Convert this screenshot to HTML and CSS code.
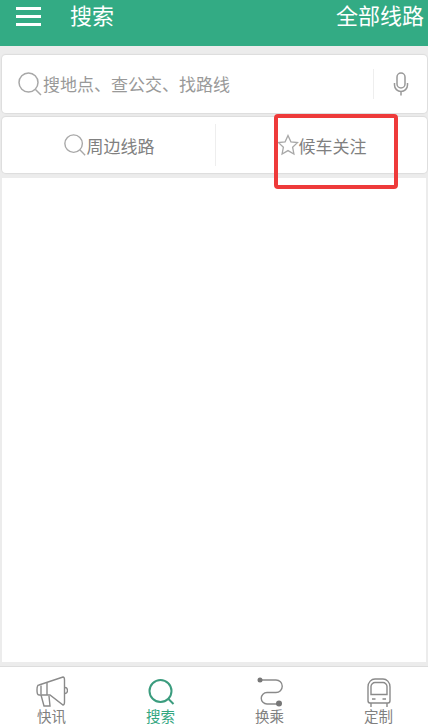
FILE: index.html
```html
<!DOCTYPE html>
<html>
	<head>
		<meta charset="utf-8">
		<title>搜索</title>
		<link rel="stylesheet" href="styles.css">
	</head>
	<body>
		<div id="wrapper">
			<div class="header">
				<div class="menu"><span></span><span></span><span></span></div>
				<div class="title">搜索</div>
				<div class="all">全部线路</div>
			</div>
			<div class="search">
				<svg class="icon-search" width="26" height="26" viewBox="0 0 26 26"><circle cx="11.500" cy="11.500" r="9.500"/><path d="M18.500 18.500L24 24"/></svg>
				<div class="placeholder">搜地点、查公交、找路线</div>
				<div class="mic">
					<svg width="18" height="24" viewBox="0 0 18 24"><rect x="5" y="1" width="8" height="15" rx="4"/><path d="M2.500 11v2a6.500 6.500 0 0 0 13 0v-2M9 19.500v4"/></svg>
				</div>
			</div>
			<div class="filters">
				<div class="filter">
					<svg class="icon-search" width="24" height="24" viewBox="0 0 26 26"><circle cx="11.500" cy="11.500" r="9.500"/><path d="M18.500 18.500L24 24"/></svg>
					<span>周边线路</span>
				</div>
				<div class="filter">
					<svg class="icon-star" width="22" height="22" viewBox="0 0 22 22"><path d="M11 1.500l2.900 6.300 6.600.8-4.900 4.600 1.300 6.800L11 16.600l-5.900 3.400 1.300-6.800-4.900-4.600 6.600-.8z"/></svg>
					<span>候车关注</span>
				</div>
			</div>
			<div class="content"></div>
			<div class="tabs">
				<div class="tab">
					<svg width="32" height="32" viewBox="0 0 32 32"><path d="M3 9L27 1c1 0 1.500 1 1.500 3v22c0 2-.5 3-1.500 3L14 19H3c-1.500 0-2-1.500-2-5s.5-5 2-5z"/><path d="M11 7v12M5 9.500v9M5 19l3 11h6l-1-10M29 11.500c2 0 2.500 1.500 2.500 3s-.5 3-2.500 3"/></svg>
					<span>快讯</span>
				</div>
				<div class="tab active">
					<svg width="32" height="32" viewBox="0 0 32 32"><circle cx="15.500" cy="15" r="11"/><path d="M23.500 23l5 5"/></svg>
					<span>搜索</span>
				</div>
				<div class="tab">
					<svg width="32" height="32" viewBox="0 0 32 32"><path d="M6 4h16a6 6 0 0 1 0 12.500h-9a5.500 5.500 0 0 0 0 11.500h11"/><circle class="dot" cx="6" cy="4" r="2.500"/><circle class="dot" cx="25" cy="27.500" r="3"/></svg>
					<span>换乘</span>
				</div>
				<div class="tab">
					<svg width="32" height="32" viewBox="0 0 32 32"><path d="M7 27c-1.500 0-2-1-2-2.500V11c0-5 3.500-8 7-8h8c3.500 0 7 3 7 8v13.500c0 1.500-.5 2.500-2 2.500z"/><path d="M8 18.500v-8c0-2 2-4 4-4h8c2 0 4 2 4 4v8zM9 23h3.500M19.500 23H23M8 27v4M24 27v4"/></svg>
					<span>定制</span>
				</div>
			</div>
			<div class="mark"></div>
		</div>
	</body>
</html>
```

FILE: styles.css
```css
html,body {margin:0;padding:0;}
body {font-family:"Noto Sans CJK SC","Liberation Sans",sans-serif;background-color:#ececec;color:#888;}
#wrapper {position:relative;width:428px;height:724px;overflow:hidden;display:flex;flex-direction:column;}
svg {display:block;flex:none;fill:none;}

.header {height:46px;flex:none;display:flex;align-items:center;background-color:#33ab84;color:#fff;box-sizing:border-box;padding:0 4px 0 16px;}
.menu {width:25px;display:flex;flex-direction:column;gap:5px;margin-top:-13px;}
.menu span {display:block;height:3px;background-color:#fff;}
.title {font-size:22px;line-height:30px;margin-left:29px;margin-top:-18px;flex:1;}
.all {font-size:22px;line-height:30px;margin-top:-18px;}

.search {height:58px;flex:none;margin:9px 1px 0 2px;display:flex;align-items:center;background-color:#fff;border-radius:4px;box-shadow:0 0 1px 1px #ddd;padding-left:15px;}
.icon-search {stroke:#a8a8a8;stroke-width:1.500;}
.placeholder {flex:1;font-size:17px;color:#999;margin-top:-2px;}
.mic {width:53px;height:30px;border-left:1px solid #eee;display:flex;align-items:center;justify-content:center;}
.mic svg {stroke:#999;stroke-width:1.500;}

.filters {height:56px;flex:none;margin:4px 1px 0 2px;display:flex;background-color:#fff;border-radius:4px;box-shadow:0 0 1px 1px #ddd;align-items:center;}
.filter {flex:1;height:42px;display:flex;align-items:center;justify-content:center;font-size:17px;color:#808080;}
.filter:first-child {flex:0 0 213px;border-right:1px solid #eee;}
.icon-star {stroke:#a8a8a8;stroke-width:1.300;}

.content {flex:1;margin:5px 2px 4px 2px;background-color:#fff;}

.tabs {height:58px;flex:none;margin:0 -5px 0 -3px;display:flex;background-color:#fff;border-top:1px solid #ddd;box-sizing:border-box;}
.tab {flex:1;display:flex;flex-direction:column;align-items:center;font-size:14.500px;line-height:16px;color:#808080;padding-top:9px;}
.tab svg {stroke:#8a8a8a;stroke-width:1.400;margin-bottom:0;}
.tab .dot {fill:#777;stroke:none;}
.tab.active {color:#33a67f;}
.tab.active svg {stroke:#3b9c7e;stroke-width:2;}

.mark {position:absolute;left:274px;top:114px;width:124px;height:75px;box-sizing:border-box;border:4px solid #ee3a3a;border-radius:4px;}
```
